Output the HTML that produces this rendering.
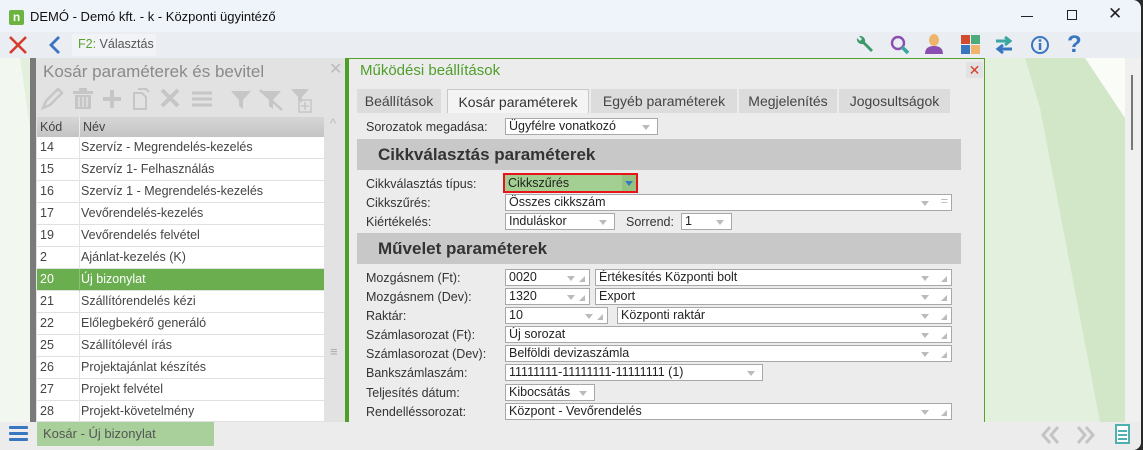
<!DOCTYPE html>
<html><head><meta charset="utf-8"><style>
*{box-sizing:border-box;margin:0;padding:0}
body{width:1143px;height:450px;overflow:hidden;background:#2a2a2a;font-family:"Liberation Sans",sans-serif;font-size:12.5px;color:#333;position:relative}
.a{position:absolute}
.win{left:0;top:0;width:1141px;height:450px;background:#eff3fa;border-radius:0 8px 8px 0;overflow:hidden}
.inp{position:absolute;height:17px;border:1px solid #a8a8a8;background:#fff;font-size:12.5px;line-height:15px;padding-left:3px;color:#222;white-space:nowrap;overflow:hidden}
.inp .dd{position:absolute;right:22px;top:6px;border-left:4px solid transparent;border-right:4px solid transparent;border-top:5px solid #bbb}
.inp .rs{position:absolute;right:4px;bottom:3px;border-left:6px solid transparent;border-bottom:6px solid #bbb}
.inp.s .dd{right:7px}
.lbl{position:absolute;left:366px;font-size:12.5px;color:#333}
.row{position:absolute;left:37px;width:287px;height:22px;border-bottom:1px solid #e0e0e0;background:#fff;font-size:12.5px;color:#444;line-height:21px}
.row span{position:absolute;left:3px}
.row b{font-weight:normal;position:absolute;left:44px}
.row i{position:absolute;left:42px;top:0;width:1px;height:22px;background:#e4e4e4}
.tab{position:absolute;top:89px;height:24px;background:#dcdcdc;font-size:14px;color:#444;line-height:24px;text-align:center}
.sec{position:absolute;left:357px;width:604px;height:31px;background:#c8c8c8;font-weight:bold;font-size:17px;color:#333;line-height:31px;padding-left:21px}
</style></head><body>
<div class="a win">
 <div class="a" style="left:9px;top:10px;width:15px;height:15px;background:#6cb33f;border-radius:2px;color:#fff;font-size:12px;font-weight:bold;line-height:14px;text-align:center">n</div>
 <div class="a" style="left:30px;top:9px;font-size:13px;color:#111">DEMÓ - Demó kft. - k - Központi ügyintéző</div>
 <div class="a" style="left:1021px;top:16px;width:12px;height:1px;background:#222"></div>
 <div class="a" style="left:1067px;top:10px;width:10px;height:10px;border:1px solid #222"></div>
 <div class="a" style="left:1108px;top:4px;font-size:17px;color:#222">✕</div>
 <div class="a" style="left:0;top:32px;width:1141px;height:26px;background:#eaedf2"></div>
 <svg class="a" style="left:8px;top:35px" width="20" height="20"><path d="M2 2L18 18M18 2L2 18" stroke="#d63b2b" stroke-width="2.6"/></svg>
 <svg class="a" style="left:48px;top:35px" width="14" height="20"><path d="M11 2L3 10L11 18" stroke="#3a75c4" stroke-width="2.8" fill="none"/></svg>
 <div class="a" style="left:72px;top:34px;width:84px;height:22px;background:#f1f3f6"></div>
 <div class="a" style="left:78px;top:37px;font-size:12.5px;color:#555"><span style="color:#5aa02c">F2:</span> Választás</div>
 <svg class="a" style="left:853px;top:34px" width="22" height="22"><path d="M4 4a5 5 0 0 0 6 6l8 8l2-2l-8-8a5 5 0 0 0-6-6l3 3l-2 2z" fill="#3c9a6a"/></svg>
 <svg class="a" style="left:889px;top:34px" width="22" height="22"><circle cx="9" cy="9" r="6" stroke="#8a4fb0" stroke-width="2.4" fill="none"/><path d="M13 13l6 6" stroke="#3aa6a0" stroke-width="3.5"/></svg>
 <svg class="a" style="left:923px;top:33px" width="22" height="22"><ellipse cx="11" cy="7" rx="5" ry="6" fill="#efb46b"/><path d="M2 21q0-8 9-8q9 0 9 8z" fill="#8a4fb0"/></svg>
 <div class="a" style="left:961px;top:35px;width:9px;height:9px;background:#d34a2e"></div>
 <div class="a" style="left:971px;top:35px;width:9px;height:9px;background:#4cab7d"></div>
 <div class="a" style="left:961px;top:45px;width:9px;height:9px;background:#3877c0"></div>
 <div class="a" style="left:971px;top:45px;width:9px;height:9px;background:#efb46b"></div>
 <svg class="a" style="left:993px;top:34px" width="22" height="22"><path d="M3 7h13M12 3l5 4l-5 4" stroke="#3aa6a0" stroke-width="3" fill="none"/><path d="M19 15H6M10 11l-5 4l5 4" stroke="#3877c0" stroke-width="3" fill="none"/></svg>
 <svg class="a" style="left:1030px;top:35px" width="20" height="20"><circle cx="10" cy="10" r="8" stroke="#3877c0" stroke-width="2" fill="none"/><rect x="8.8" y="8" width="2.5" height="7" fill="#3877c0"/><circle cx="10" cy="5.5" r="1.4" fill="#3877c0"/></svg>
 <div class="a" style="left:1067px;top:31px;font-size:24px;font-weight:bold;color:#3877c0">?</div>
 <div class="a" style="left:0;top:58px;width:1141px;height:364px;background:#e4f0de;overflow:hidden">
  <svg class="a" style="left:0;top:0" width="1141" height="364"><path d="M0 0H20L30 70V364H0z" fill="#f2f7ef"/><path d="M985 0h40L1040 50L1100 364H1125V0z" fill="#d2e7c8"/><path d="M1085 0h40v60z" fill="#fafcf8"/></svg>
 </div>
 <div class="a" style="left:1125px;top:58px;width:16px;height:364px;background:#f0f0f0"></div>
 <div class="a" style="left:1131px;top:75px;width:2px;height:75px;background:#777"></div>
 <div class="a" style="left:30px;top:58px;width:6px;height:364px;background:#7a7a7a"></div>
 <div class="a" style="left:36px;top:58px;width:309px;height:364px;background:#e2e2e2"></div>
 <div class="a" style="left:43px;top:62px;font-size:17px;color:#8a8a8a">Kosár paraméterek és bevitel</div>
 <div class="a" style="left:329px;top:59px;font-size:16px;color:#bbb">✕</div>
 <svg class="a" style="left:38px;top:86px" width="280" height="28" fill="#c6c6c6" stroke="#c6c6c6">
  <path d="M5 22l3-7l12-12l4 4l-12 12z" fill="none" stroke-width="2.5"/>
  <rect x="35" y="5" width="20" height="3" stroke="none"/><rect x="41" y="2" width="8" height="3" stroke="none"/><path d="M37 9h16v14h-16z" stroke="none"/><path d="M41 11v10M45 11v10M49 11v10" stroke="#e2e2e2" stroke-width="1.5"/>
  <path d="M74 4v18M65 13h18" stroke-width="4" fill="none"/>
  <path d="M96 7h8l4 4v12h-12z" fill="none" stroke-width="2"/><path d="M100 3h8l3 3" fill="none" stroke-width="2"/>
  <path d="M124 4l16 16M140 4l-16 16" stroke-width="4" fill="none"/>
  <path d="M154 7h20M154 13h20M154 19h20" stroke-width="3" fill="none"/>
  <path d="M193 5h20l-8 9v9l-4-3v-6z" stroke="none"/>
  <path d="M223 5h20l-8 9v9l-4-3v-6z" stroke="none"/><path d="M222 4l22 20" stroke-width="2.5"/>
  <path d="M253 3h18l-7 8v6l-4-3v-3z" stroke="none"/><rect x="261" y="14" width="12" height="12" fill="none" stroke-width="1.5"/><path d="M267 16v8M263 20h8" stroke-width="1.5"/>
 </svg>
 <div class="a" style="left:37px;top:117px;width:287px;height:20px;background:linear-gradient(#d6d6d6,#c4c4c4);font-size:12.5px;line-height:20px;color:#444"><span class="a" style="left:3px">Kód</span><span class="a" style="left:42px;width:1px;height:20px;background:#eee"></span><span class="a" style="left:46px">Név</span></div>
 <div class="a" style="left:330px;top:116px;font-size:13px;color:#bbb">^</div>
 <div class="a" style="left:330px;top:344px;font-size:13px;color:#aaa">≡</div>
 <div class="row" style="top:137px"><span>14</span><i></i><b>Szervíz - Megrendelés-kezelés</b></div>
 <div class="row" style="top:159px"><span>15</span><i></i><b>Szervíz 1- Felhasználás</b></div>
 <div class="row" style="top:181px"><span>16</span><i></i><b>Szervíz 1 - Megrendelés-kezelés</b></div>
 <div class="row" style="top:203px"><span>17</span><i></i><b>Vevőrendelés-kezelés</b></div>
 <div class="row" style="top:225px"><span>19</span><i></i><b>Vevőrendelés felvétel</b></div>
 <div class="row" style="top:247px"><span>2</span><i></i><b>Ajánlat-kezelés (K)</b></div>
 <div class="row" style="top:269px;background:#6aae50;color:#fff"><span>20</span><i style="background:#8cc276"></i><b>Új bizonylat</b></div>
 <div class="row" style="top:291px"><span>21</span><i></i><b>Szállítórendelés kézi</b></div>
 <div class="row" style="top:313px"><span>22</span><i></i><b>Előlegbekérő generáló</b></div>
 <div class="row" style="top:335px"><span>25</span><i></i><b>Szállítólevél írás</b></div>
 <div class="row" style="top:357px"><span>26</span><i></i><b>Projektajánlat készítés</b></div>
 <div class="row" style="top:379px"><span>27</span><i></i><b>Projekt felvétel</b></div>
 <div class="row" style="top:401px;height:21px"><span>28</span><i></i><b>Projekt-követelmény</b></div>
 <div class="a" style="left:345px;top:58px;width:640px;height:364px;background:#ececec;border-top:1px solid #5aa02c;border-right:1px solid #5aa02c"></div>
 <div class="a" style="left:345px;top:58px;width:4px;height:364px;background:#4f9e2a"></div>
 <div class="a" style="left:360px;top:62px;font-size:15px;color:#4f9e2a">Működési beállítások</div>
 <div class="a" style="left:966px;top:62px;width:17px;height:16px;background:#e2e2e2;color:#d63b2b;font-size:14px;line-height:16px;text-align:center">✕</div>
 <div class="tab" style="left:357px;width:84px">Beállítások</div>
 <div class="tab" style="left:447px;width:142px;background:#f4f4f4;border:1px solid #c8c8c8;border-bottom:none;color:#333">Kosár paraméterek</div>
 <div class="tab" style="left:591px;width:146px">Egyéb paraméterek</div>
 <div class="tab" style="left:739px;width:98px">Megjelenítés</div>
 <div class="tab" style="left:839px;width:111px">Jogosultságok</div>
 <div class="lbl" style="top:120px">Sorozatok megadása:</div>
 <div class="inp s" style="left:505px;top:118px;width:153px">Ügyfélre vonatkozó<i class="dd"></i></div>
 <div class="sec" style="top:139px">Cikkválasztás paraméterek</div>
 <div class="lbl" style="top:177px">Cikkválasztás típus:</div>
 <div class="a" style="left:503px;top:173px;width:135px;height:20px;border:2px solid #e8141a;background:#a3cf92;padding-left:3px;line-height:16px;color:#222">Cikkszűrés<span class="a" style="left:117px;top:0;width:14px;height:16px;background:#93c37f"></span><span class="a" style="left:120px;top:6px;border-left:4px solid transparent;border-right:4px solid transparent;border-top:5px solid #3877c0"></span></div>
 <div class="lbl" style="top:196px">Cikkszűrés:</div>
 <div class="inp" style="left:505px;top:194px;width:447px">Összes cikkszám<i class="dd"></i><span class="a" style="right:3px;top:-1px;color:#bbb">=</span></div>
 <div class="lbl" style="top:215px">Kiértékelés:</div>
 <div class="inp s" style="left:505px;top:213px;width:110px">Induláskor<i class="dd"></i></div>
 <div class="a" style="left:626px;top:215px">Sorrend:</div>
 <div class="inp s" style="left:681px;top:213px;width:51px">1<i class="dd"></i></div>
 <div class="sec" style="top:233px">Művelet paraméterek</div>
 <div class="lbl" style="top:271px">Mozgásnem (Ft):</div>
 <div class="inp" style="left:505px;top:269px;width:85px">0020<i class="dd" style="right:14px"></i><i class="rs"></i></div>
 <div class="inp" style="left:595px;top:269px;width:357px">Értékesítés Központi bolt<i class="dd"></i><i class="rs"></i></div>
 <div class="lbl" style="top:290px">Mozgásnem (Dev):</div>
 <div class="inp" style="left:505px;top:288px;width:85px">1320<i class="dd" style="right:14px"></i><i class="rs"></i></div>
 <div class="inp" style="left:595px;top:288px;width:357px">Export<i class="dd"></i><i class="rs"></i></div>
 <div class="lbl" style="top:309px">Raktár:</div>
 <div class="inp" style="left:505px;top:307px;width:103px">10<i class="dd" style="right:14px"></i><i class="rs"></i></div>
 <div class="inp" style="left:617px;top:307px;width:335px">Központi raktár<i class="dd"></i><i class="rs"></i></div>
 <div class="lbl" style="top:328px">Számlasorozat (Ft):</div>
 <div class="inp" style="left:505px;top:326px;width:447px">Új sorozat<i class="dd"></i><i class="rs"></i></div>
 <div class="lbl" style="top:347px">Számlasorozat (Dev):</div>
 <div class="inp" style="left:505px;top:345px;width:447px">Belföldi devizaszámla<i class="dd"></i><i class="rs"></i></div>
 <div class="lbl" style="top:366px">Bankszámlaszám:</div>
 <div class="inp s" style="left:505px;top:364px;width:258px">11111111-11111111-11111111 (1)<i class="dd"></i></div>
 <div class="lbl" style="top:386px">Teljesítés dátum:</div>
 <div class="inp s" style="left:505px;top:384px;width:90px">Kibocsátás<i class="dd"></i></div>
 <div class="lbl" style="top:405px">Rendelléssorozat:</div>
 <div class="inp" style="left:505px;top:403px;width:447px">Központ - Vevőrendelés<i class="dd"></i><i class="rs"></i></div>
 <div class="a" style="left:0;top:422px;width:1141px;height:28px;background:#ececec"></div>
 <div class="a" style="left:9px;top:426px;width:19px;height:3px;background:#3877c0;border-radius:1px;box-shadow:0 6px 0 #3877c0,0 12px 0 #3877c0"></div>
 <div class="a" style="left:37px;top:422px;width:177px;height:24px;background:#a9d09b;padding-left:6px;line-height:24px;color:#555;font-size:13px">Kosár - Új bizonylat</div>
 <svg class="a" style="left:1040px;top:424px" width="60" height="22" fill="none" stroke="#c4c4c4" stroke-width="3"><path d="M10 3l-7 8l7 8M18 3l-7 8l7 8M38 3l7 8l-7 8M46 3l7 8l-7 8"/></svg>
 <div class="a" style="left:1115px;top:424px;width:15px;height:20px;border:2px solid #4fb0b0;background:#fff"></div>
 <div class="a" style="left:1118px;top:430px;width:9px;height:2px;background:#4fb0b0;box-shadow:0 4px 0 #4fb0b0,0 8px 0 #4fb0b0"></div>
</div>
</body></html>
